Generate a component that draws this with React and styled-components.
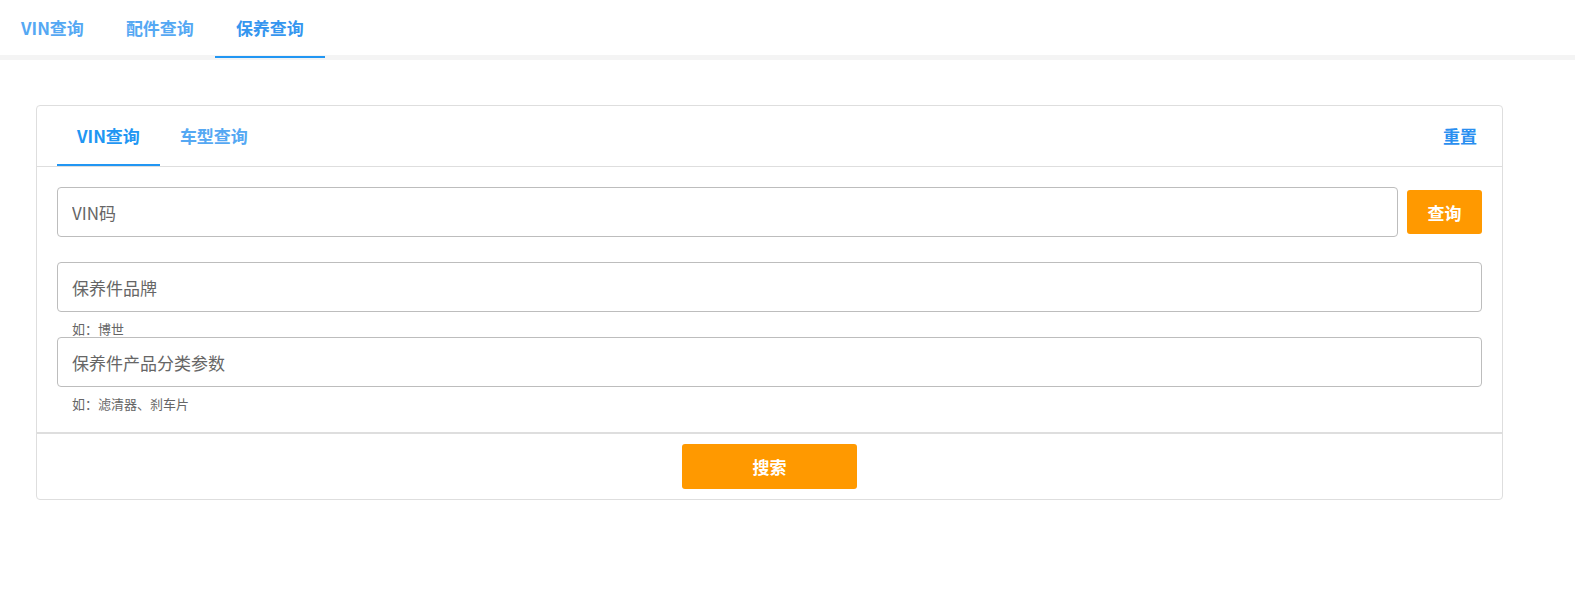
import styled, { createGlobalStyle } from "styled-components";

const GlobalStyle = createGlobalStyle`
  body {
    margin: 0;
    background: #fff;
    font-family: "Noto Sans CJK SC", "Noto Sans", sans-serif;
  }
  * { box-sizing: border-box; }
`;

const App = () => {
  return (
    <>
      <GlobalStyle />
      <TopNav>
        <TopTab>VIN查询</TopTab>
        <TopTab>配件查询</TopTab>
        <TopTab active>保养查询</TopTab>
      </TopNav>
      <Divider />
      <Card>
        <CardHead>
          <SubTab active>VIN查询</SubTab>
          <SubTab>车型查询</SubTab>
          <Reset>重置</Reset>
        </CardHead>
        <CardBody>
          <VinRow>
            <Input placeholder="VIN码" />
            <QueryButton>查询</QueryButton>
          </VinRow>
          <Field>
            <Input placeholder="保养件品牌" />
            <Hint>如：博世</Hint>
          </Field>
          <Field>
            <Input placeholder="保养件产品分类参数" />
            <Hint>如：滤清器、刹车片</Hint>
          </Field>
        </CardBody>
        <CardFoot>
          <SearchButton>搜索</SearchButton>
        </CardFoot>
      </Card>
    </>
  );
};

const TopNav = styled.div`
  display: flex;
  height: 55px;
`;
const TopTab = styled.div`
  display: flex;
  align-items: center;
  padding: 0 21px 1px;
  height: 100%;
  font-size: 17px;
  font-weight: 600;
  color: ${(p) => (p.active ? "#3596ef" : "#55a8f3")};
  position: relative;
  &::after {
    content: "";
    display: ${(p) => (p.active ? "block" : "none")};
    position: absolute;
    left: 0;
    right: 0;
    bottom: -3px;
    height: 2px;
    background: #2196f3;
  }
`;
const Divider = styled.div`
  height: 5px;
  background: #f4f4f4;
`;
const Card = styled.div`
  width: 1467px;
  margin: 45px 0 0 36px;
  border: 1px solid #dedede;
  border-radius: 4px;
`;
const CardHead = styled.div`
  display: flex;
  align-items: stretch;
  height: 61px;
  padding: 0 25px 0 20px;
  border-bottom: 1px solid #dedede;
`;
const SubTab = styled.div`
  display: flex;
  align-items: center;
  padding: 0 20px;
  font-size: 17px;
  font-weight: 600;
  color: ${(p) => (p.active ? "#2196f3" : "#55a8f3")};
  border-bottom: 2px solid ${(p) => (p.active ? "#2196f3" : "transparent")};
`;
const Reset = styled.div`
  margin-left: auto;
  display: flex;
  align-items: center;
  padding-bottom: 2px;
  font-size: 17px;
  font-weight: 600;
  color: #2a8ff0;
`;
const CardBody = styled.div`
  padding: 20px 20px 20px;
  display: flex;
  flex-direction: column;
`;
const VinRow = styled.div`
  display: flex;
  align-items: center;
  gap: 9px;
  margin-bottom: 25px;
`;
const Field = styled.div`
  display: flex;
  flex-direction: column;
`;
const Input = styled.input`
  flex: 1 1 auto;
  min-width: 0;
  width: 100%;
  height: 50px;
  border: 1px solid #bdbdbd;
  border-radius: 4px;
  padding: 0 14px;
  font-family: inherit;
  font-size: 17px;
  color: #333;
  outline: none;
  &::placeholder {
    color: #666;
  }
`;
const Hint = styled.div`
  padding: 9px 15px 0;
  height: 25px;
  font-size: 13px;
  line-height: 16px;
  color: #666;
`;
const QueryButton = styled.button`
  flex: none;
  width: 75px;
  height: 44px;
  border: none;
  border-radius: 3px;
  background: #ff9900;
  color: #fff;
  font-family: inherit;
  font-size: 17px;
  font-weight: 700;
`;
const CardFoot = styled.div`
  border-top: 2px solid #dedede;
  display: flex;
  justify-content: center;
  padding: 10px 0;
`;
const SearchButton = styled.button`
  width: 175px;
  height: 45px;
  border: none;
  border-radius: 3px;
  background: #ff9900;
  color: #fff;
  font-family: inherit;
  font-size: 17px;
  font-weight: 700;
`;

export default App;
